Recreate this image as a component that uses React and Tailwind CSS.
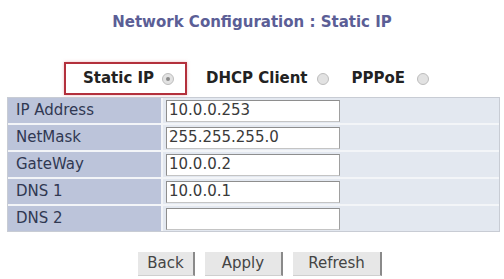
import React from "react";

function Radio({ checked }) {
  return (
    <span className="relative inline-block w-[12px] h-[12px] rounded-full border border-[#bdbdbd] bg-[#e2e2e2] shrink-0">
      {checked && (
        <span className="absolute left-[3px] top-[3px] w-[4px] h-[4px] rounded-full bg-[#8a8a8a]" />
      )}
    </span>
  );
}

const rows = [
  ["IP Address", "10.0.0.253"],
  ["NetMask", "255.255.255.0"],
  ["GateWay", "10.0.0.2"],
  ["DNS 1", "10.0.0.1"],
  ["DNS 2", ""],
];

export default function App() {
  return (
    <div className="w-[504px] h-[279px] bg-white overflow-hidden font-['DejaVu_Sans',sans-serif]">
      <div className="pt-[13px] h-[31px] text-center text-[15px] leading-[18px] font-bold text-[#5b5e96]">
        Network Configuration : Static IP
      </div>
      <div className="mt-[31px] flex items-center h-[33px] text-[15px] font-bold text-[#222]">
        <div className="ml-[64px] w-[123px] h-[33px] border-2 border-[#b3303c] flex items-center pl-[17px] gap-[8px] shadow-[0_0_3px_rgba(220,120,130,0.5)]">
          <span>Static IP</span>
          <Radio checked />
        </div>
        <div className="ml-[19px] flex items-center gap-[9px]">
          <span>DHCP Client</span>
          <Radio />
        </div>
        <div className="ml-[23px] flex items-center gap-[12px]">
          <span>PPPoE</span>
          <Radio />
        </div>
      </div>
      <div className="mt-[2px] ml-[7px] w-[493px] border border-[#c8ccd4] bg-[#f3f5f8] grid grid-cols-[153px_1fr] gap-y-[2px] gap-x-[2px]">
        {rows.map(([label, value]) => (
          <React.Fragment key={label}>
            <div className="h-[25px] bg-[#bcc4da] pl-[8px] flex items-center text-[15px] text-[#303852]">
              {label}
            </div>
            <div className="h-[25px] bg-[#e3e8f0] pl-[3px] flex items-center">
              <div className="w-[174px] h-[22px] bg-white border border-[#8e8e8e] border-b-[#c4c4c4] border-r-[#a0a0a0] flex items-center pl-[2px] text-[15px] text-[#3a3a3a]">
                {value}
              </div>
            </div>
          </React.Fragment>
        ))}
      </div>
      <div className="mt-[20px] flex ml-[138px] gap-[10px] text-[15px] text-[#444]">
        <div className="w-[57px] h-[24px] bg-[#e7e7e7] border-r-2 border-b border-r-[#8a8a8a] border-b-[#cfcfcf] flex items-center justify-center">
          Back
        </div>
        <div className="w-[78px] h-[24px] bg-[#e7e7e7] border-r-2 border-b border-r-[#8a8a8a] border-b-[#cfcfcf] flex items-center justify-center">
          Apply
        </div>
        <div className="w-[89px] h-[24px] bg-[#e7e7e7] border-r-2 border-b border-r-[#8a8a8a] border-b-[#cfcfcf] flex items-center justify-center">
          Refresh
        </div>
      </div>
    </div>
  );
}
